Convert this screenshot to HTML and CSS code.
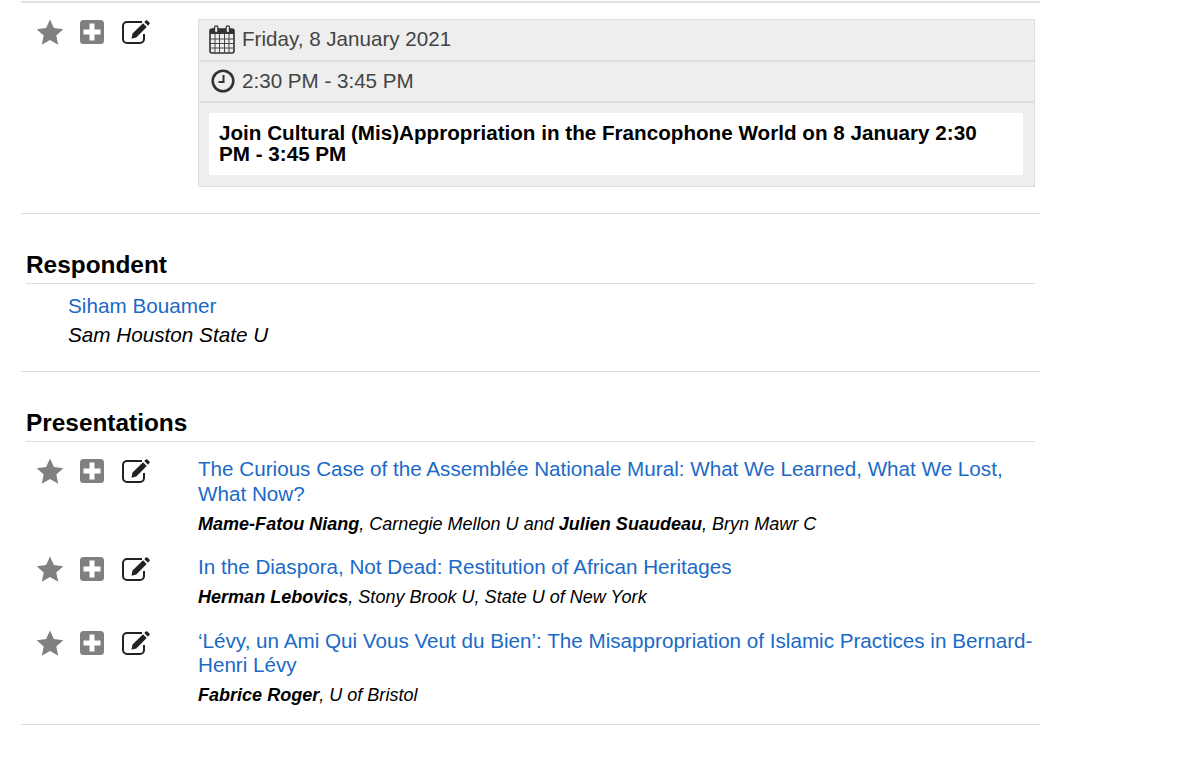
FILE: index.html
```html
<!DOCTYPE html>
<html lang="en">
  <head>
    <meta charset="UTF-8" />
    <meta name="viewport" content="width=device-width, initial-scale=1.0" />
    <title>Cultural (Mis)Appropriation in the Francophone World</title>
    <link rel="stylesheet" href="styles.css">
  </head>
  <body>
    <svg class="sprites" width="0" height="0" aria-hidden="true">
      <symbol id="i-star" viewBox="0 0 28 27">
        <path d="M14 .5l3.900 8.600 9.400 1.100-7 6.300 1.900 9.300L14 21.100l-8.200 4.700 1.900-9.300-7-6.300 9.400-1.100z" />
      </symbol>
      <symbol id="i-plus" viewBox="0 0 24 24">
        <path fill-rule="evenodd" d="M3.500 0h17A3.500 3.500 0 0 1 24 3.500v17a3.500 3.500 0 0 1-3.500 3.500h-17A3.500 3.500 0 0 1 0 20.500v-17A3.500 3.500 0 0 1 3.500 0zM9.500 3.500v6h-6v5h6v6h5v-6h6v-5h-6v-6z" />
      </symbol>
      <symbol id="i-edit" viewBox="0 0 28 24">
        <path class="edit-box" d="M22 14V19a4 4 0 0 1-4 4H5a4 4 0 0 1-4-4V6a4 4 0 0 1 4-4h15" />
        <path d="M10.500 13.500L21 3.300l3.700 3.700L14.300 17.500l-4.800 1.200zM22.300 2l1.500-1.500a1.200 1.200 0 0 1 1.600 0l2 2a1.200 1.200 0 0 1 0 1.600L26 5.700z" />
      </symbol>
    </svg>

    <div class="page">
      <!-- Session time and join link -->
      <section class="session">
        <div class="actions">
          <svg class="icon star"><use href="#i-star" /></svg>
          <svg class="icon plus"><use href="#i-plus" /></svg>
          <svg class="icon edit"><use href="#i-edit" /></svg>
        </div>
        <div class="details">
          <div class="detail-row date-row">
            <svg class="calendar" viewBox="0 0 26 29">
              <rect x="1" y="4" width="24" height="24" rx="2" fill="none" stroke="#333" stroke-width="1.600" />
              <rect x="1" y="4" width="24" height="5" fill="#333" />
              <path d="M1 14h24M1 18.500h24M1 23h24M6 9v19M10.500 9v19M15.500 9v19M20 9v19" stroke="#444" stroke-width="1" />
              <rect x="5.500" y=".8" width="3.400" height="7" rx="1.700" fill="#eee" stroke="#333" stroke-width="1.300" />
              <rect x="17.100" y=".8" width="3.400" height="7" rx="1.700" fill="#eee" stroke="#333" stroke-width="1.300" />
            </svg>
            <span>Friday, 8 January 2021</span>
          </div>
          <div class="detail-row">
            <svg class="clock" viewBox="0 0 24 24">
              <circle cx="12" cy="12" r="10.300" fill="none" stroke="#333" stroke-width="2.600" />
              <path d="M12.500 6v7H7.500" fill="none" stroke="#333" stroke-width="2" />
            </svg>
            <span>2:30 PM - 3:45 PM</span>
          </div>
          <div class="join-panel">
            <div class="join-box">Join Cultural (Mis)Appropriation in the Francophone World on 8 January 2:30 PM - 3:45 PM</div>
          </div>
        </div>
      </section>

      <section class="block">
        <h2>Respondent</h2>
        <div class="person">
          <a href="#">Siham Bouamer</a>
          <div class="school">Sam Houston State U</div>
        </div>
      </section>

      <section class="block last">
        <h2>Presentations</h2>
        <div class="paper">
          <div class="actions">
            <svg class="icon star"><use href="#i-star" /></svg>
            <svg class="icon plus"><use href="#i-plus" /></svg>
            <svg class="icon edit"><use href="#i-edit" /></svg>
          </div>
          <div class="paper-text">
            <a href="#">The Curious Case of the Assemblée Nationale Mural: What We Learned, What We Lost, What Now?</a>
            <p><b>Mame-Fatou Niang</b>, Carnegie Mellon U and <b>Julien Suaudeau</b>, Bryn Mawr C</p>
          </div>
        </div>
        <div class="paper">
          <div class="actions">
            <svg class="icon star"><use href="#i-star" /></svg>
            <svg class="icon plus"><use href="#i-plus" /></svg>
            <svg class="icon edit"><use href="#i-edit" /></svg>
          </div>
          <div class="paper-text">
            <a href="#">In the Diaspora, Not Dead: Restitution of African Heritages</a>
            <p><b>Herman Lebovics</b>, Stony Brook U, State U of New York</p>
          </div>
        </div>
        <div class="paper">
          <div class="actions">
            <svg class="icon star"><use href="#i-star" /></svg>
            <svg class="icon plus"><use href="#i-plus" /></svg>
            <svg class="icon edit"><use href="#i-edit" /></svg>
          </div>
          <div class="paper-text">
            <a href="#">‘Lévy, un Ami Qui Vous Veut du Bien’: The Misappropriation of Islamic Practices in Bernard-Henri Lévy</a>
            <p><b>Fabrice Roger</b>, U of Bristol</p>
          </div>
        </div>
      </section>
    </div>
  </body>
</html>
```

FILE: styles.css
```css
body {
  font-family: "Liberation Sans", Arial, sans-serif;
  background-color: white;
  color: black;
  margin: 0;
}
a {
  color: #1a6ac6;
  text-decoration: none;
}
.sprites {
  display: block;
  height: 0;
}
.page {
  width: 1019px;
  margin-left: 21px;
  border-top: 2px solid #e2dfe0;
  padding-top: 16px;
  margin-top: 1px;
}
.session {
  display: flex;
  padding-bottom: 26px;
  border-bottom: 1px solid #ddd;
}
.actions {
  flex: none;
  display: flex;
  align-items: flex-start;
  width: 177px;
  padding-left: 15px;
  box-sizing: border-box;
}
.icon {
  display: block;
  fill: #808080;
}
.star {
  width: 28px;
  height: 27px;
}
.plus {
  width: 24px;
  height: 24px;
  margin: 1px 0 0 16px;
}
.edit {
  width: 28px;
  height: 24px;
  margin: 1px 0 0 18px;
  fill: #222;
}
.edit-box {
  fill: none;
  stroke: #222;
  stroke-width: 2;
}
.details {
  width: 837px;
  border: 1px solid #ddd;
  background-color: #eee;
  box-sizing: border-box;
}
.detail-row {
  display: flex;
  align-items: center;
  height: 41px;
  padding: 0 0 2px 10px;
  border-bottom: 2px solid #ddd;
  box-sizing: border-box;
  font-size: 20.600px;
  color: #444;
}
.date-row {
  height: 42px;
}
.calendar {
  width: 26px;
  height: 29px;
  margin-right: 7px;
}
.clock {
  width: 24px;
  height: 24px;
  margin: 0 7px 0 2px;
}
.join-panel {
  padding: 10px 11px 11px 10px;
}
.join-box {
  background-color: white;
  padding: 9px 20px 11px 10px;
  font-size: 20.650px;
  font-weight: bold;
  line-height: 21px;
}
.block {
  padding: 34px 5px 0;
  border-bottom: 1px solid #ddd;
}
.block h2 {
  margin: 0;
  font-size: 24.400px;
  line-height: 33px;
  border-bottom: 1px solid #ddd;
  padding-bottom: 2px;
}
.person {
  padding: 7px 0 22px 42px;
  font-size: 20.700px;
  line-height: 29px;
}
.school {
  font-style: italic;
}
.last {
  padding-bottom: 16px;
}
.paper {
  display: flex;
  margin: 0 0 19px -5px;
}
.paper:first-of-type {
  margin-top: 15px;
}
.paper:last-child {
  margin-bottom: 0;
}
.paper .actions {
  padding-top: 1px;
}
.paper-text {
  width: 838px;
  font-size: 20.650px;
  line-height: 24.500px;
}
.paper-text p {
  margin: 5.500px 0 0;
  padding-bottom: 0.500px;
  font-size: 18.050px;
  font-style: italic;
  line-height: 24px;
}
```
